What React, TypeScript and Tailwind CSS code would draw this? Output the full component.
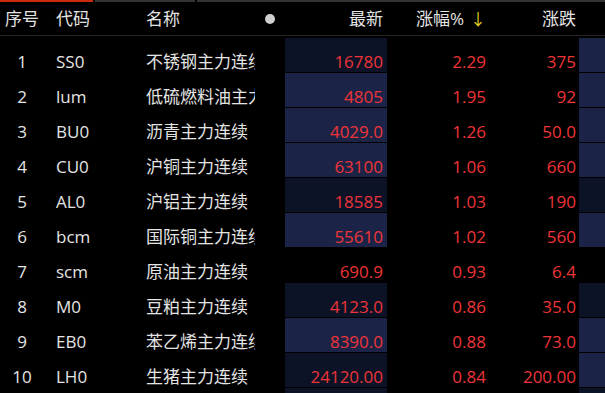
const rows = [
  { no: 1, code: "SS0", name: "不锈钢主力连续", last: "16780", pct: "2.29", chg: "375", a: "dark", b: "lite" },
  { no: 2, code: "lum", name: "低硫燃料油主力连续", last: "4805", pct: "1.95", chg: "92", a: "lite", b: "lite" },
  { no: 3, code: "BU0", name: "沥青主力连续", last: "4029.0", pct: "1.26", chg: "50.0", a: "lite", b: "lite" },
  { no: 4, code: "CU0", name: "沪铜主力连续", last: "63100", pct: "1.06", chg: "660", a: "lite", b: "lite" },
  { no: 5, code: "AL0", name: "沪铝主力连续", last: "18585", pct: "1.03", chg: "190", a: "dark", b: "dark" },
  { no: 6, code: "bcm", name: "国际铜主力连续", last: "55610", pct: "1.02", chg: "560", a: "lite", b: "lite" },
  { no: 7, code: "scm", name: "原油主力连续", last: "690.9", pct: "0.93", chg: "6.4", a: "none", b: "none" },
  { no: 8, code: "M0", name: "豆粕主力连续", last: "4123.0", pct: "0.86", chg: "35.0", a: "dark", b: "dark" },
  { no: 9, code: "EB0", name: "苯乙烯主力连续", last: "8390.0", pct: "0.88", chg: "73.0", a: "lite", b: "lite" },
  { no: 10, code: "LH0", name: "生猪主力连续", last: "24120.00", pct: "0.84", chg: "200.00", a: "dark", b: "lite" },
  { no: 11, code: "", name: "", last: "", pct: "", chg: "", a: "dark", b: "dark" },
];

function bg(k: string) {
  if (k === "dark") return "bg-[#0d1327]";
  if (k === "lite") return "bg-[#1b2446]";
  return "";
}

export default function App() {
  return (
    <div
      className="w-[605px] h-[393px] overflow-hidden bg-black text-[17px] text-[#e4e4e4]"
      style={{ fontFamily: '"Open Sans", "Noto Sans CJK SC", sans-serif' }}
    >
      {/* tab strip */}
      <div className="flex h-[2px] gap-[2px]">
        <div className="w-[93px] bg-[#c9290d]"></div>
        <div className="w-[100px] bg-[#333333]"></div>
        <div className="flex-1 bg-[#333333]"></div>
      </div>

      {/* header */}
      <div className="flex items-center h-[34px] border-b border-[#262626] leading-none">
        <div className="w-[44px] text-center">序号</div>
        <div className="w-[90px] pl-[12px]">代码</div>
        <div className="w-[121px] pl-[12px]">名称</div>
        <div className="w-[30px] flex justify-center">
          <div className="w-[10px] h-[10px] rounded-full bg-[#cfcfcf]"></div>
        </div>
        <div className="w-[102px] text-right pr-[4px]">最新</div>
        <div className="w-[103px] flex justify-end items-center pr-[4px]">
          <span>涨幅%</span>
          <span className="ml-[6px] text-[#e6d21e] text-[16px]">↓</span>
        </div>
        <div className="w-[89px] text-right pr-[3px]">涨跌</div>
      </div>

      <div className="pt-[2px]">
        {rows.map((r) => (
          <div key={r.no} className="flex h-[35px] leading-none">
            <div className="w-[44px] text-center pt-[15px]">{r.code ? r.no : ""}</div>
            <div className="w-[90px] pl-[12px] pt-[15px]">{r.code}</div>
            <div className="w-[121px] pl-[12px] pt-[15px] overflow-hidden whitespace-nowrap">{r.name}</div>
            <div className="w-[30px]"></div>
            <div className={`w-[102px] h-[34px] text-right pr-[4px] pt-[15px] text-[#ee3438] ${bg(r.a)}`}>{r.last}</div>
            <div className="w-[103px] text-right pr-[4px] pt-[15px] text-[#ee3438]">{r.pct}</div>
            <div className="w-[89px] text-right pr-[3px] pt-[15px] text-[#ee3438]">{r.chg}</div>
            <div className={`flex-1 h-[34px] ${bg(r.b)}`}></div>
          </div>
        ))}
      </div>
    </div>
  );
}
